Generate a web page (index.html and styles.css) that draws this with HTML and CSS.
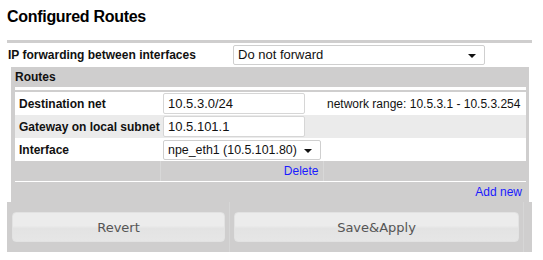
FILE: index.html
```html
<!DOCTYPE html>
<html lang="en">
<head>
  <meta charset="UTF-8">
  <title>Configured Routes</title>
  <link rel="stylesheet" href="styles.css">
</head>
<body>
  <h2>Configured Routes</h2>

  <div class="map">
    <div class="forward-row">
      <span class="label">IP forwarding between interfaces</span>
      <span class="select wide"><span class="select-text">Do not forward</span></span>
    </div>

    <div class="routes">
      <div class="routes-title">Routes</div>
      <div class="table-wrap">
        <table class="route-table">
          <tr>
            <td class="label">Destination net</td>
            <td><span class="input">10.5.3.0/24</span></td>
            <td class="info">network range: 10.5.3.1 - 10.5.3.254</td>
          </tr>
          <tr class="alt">
            <td class="label">Gateway on local subnet</td>
            <td><span class="input">10.5.101.1</span></td>
            <td></td>
          </tr>
          <tr>
            <td class="label">Interface</td>
            <td><span class="select small"><span class="select-text">npe_eth1 (10.5.101.80)</span></span></td>
            <td></td>
          </tr>
          <tr class="actions">
            <td></td>
            <td class="delete"><a href="#">Delete</a></td>
            <td></td>
          </tr>
        </table>
      </div>
      <div class="add-new"><a href="#">Add new</a></div>
    </div>

    <div class="buttons">
      <div class="btn-cell first"><button>Revert</button></div>
      <div class="btn-cell"><button>Save&amp;Apply</button></div>
      <div class="btn-cell last"></div>
    </div>
  </div>
</body>
</html>
```

FILE: styles.css
```css
body {
  margin: 0;
  font-family: "Liberation Sans", Arial, sans-serif;
  font-size: 12px;
  color: #111;
  background-color: white;
}
h2 {
  margin: 7px 0 13px 7px;
  font-size: 16px;
  line-height: 20px;
  letter-spacing: -0.3px;
  color: #000;
}
a {
  color: #1a1aff;
  text-decoration: none;
}
.map {
  margin-left: 7px;
  width: 525px;
  border-top: 3px solid #cfcece;
}
.label {
  font-weight: bold;
  color: #111;
}
.forward-row {
  display: grid;
  grid-template-columns: 226px 252px;
  align-items: center;
  height: 24px;
}
.forward-row .label {
  padding-left: 1px;
}
.select {
  position: relative;
  display: block;
  box-sizing: border-box;
  height: 20px;
  border: 1px solid #cfcfcf;
  border-radius: 2px;
  background-color: white;
  font-size: 13px;
  line-height: 18px;
  color: #111;
}
.select::after {
  content: "";
  position: absolute;
  right: 8px;
  top: 8px;
  border-left: 4px solid transparent;
  border-right: 4px solid transparent;
  border-top: 4px solid #111;
}
.select-text {
  padding-left: 4px;
}
.select.small {
  width: 158px;
  margin-top: 1px;
  font-size: 12.4px;
}
.routes {
  margin: 0 3px 0 4px;
  background-color: #cfcece;
}
.routes-title {
  height: 20px;
  line-height: 20px;
  padding-left: 4px;
  font-weight: bold;
  color: #111;
}
.table-wrap {
  margin: 0 3px 0 4px;
  padding: 3px 0 1px;
  background-color: white;
}
.route-table {
  width: 100%;
  table-layout: fixed;
  border-collapse: collapse;
  border-top: 2px solid #cfcece;
}
.route-table td {
  padding: 0;
  height: 23px;
}
.route-table td:first-child {
  width: 141px;
  padding-left: 4px;
}
.route-table td:nth-child(2) {
  width: 160px;
  padding-left: 3px;
}
.route-table tr.alt td {
  background-color: #ebebeb;
}
.input {
  display: block;
  box-sizing: border-box;
  width: 142px;
  height: 21px;
  padding-left: 4px;
  border: 1px solid #d6d6d6;
  border-radius: 2px;
  background-color: white;
  font-size: 13px;
  line-height: 19px;
  color: #111;
}
.info {
  padding-left: 4px !important;
  white-space: nowrap;
  color: #111;
}
.route-table tr.actions td {
  height: 20px;
  background-color: #cfcece;
  border-left: 1px solid #d8d8d8;
}
.route-table tr.actions td:first-child {
  border-left: none;
}
.delete {
  text-align: right;
  padding-right: 4px !important;
  font-size: 12px;
}
.add-new {
  height: 20px;
  line-height: 20px;
  text-align: right;
  padding-right: 7px;
}
.buttons {
  display: grid;
  grid-template-columns: 222px 294px 9px;
  height: 50px;
  background-color: #cfcece;
}
.btn-cell {
  padding: 10px 4px 10px 4px;
  border-left: 1px solid #d6d6d6;
}
.btn-cell.first {
  padding-left: 5px;
  border-left: none;
}
.btn-cell.last {
  padding: 0;
}
button {
  display: block;
  width: 100%;
  height: 30px;
  border: 1px solid #e2e2e2;
  border-radius: 4px;
  background: linear-gradient(#ececec 0%, #ececec 45%, #e3e3e3 55%, #e6e6e6 100%);
  font-family: "DejaVu Sans", Verdana, sans-serif;
  font-size: 13px;
  color: #555;
  cursor: pointer;
}
```
